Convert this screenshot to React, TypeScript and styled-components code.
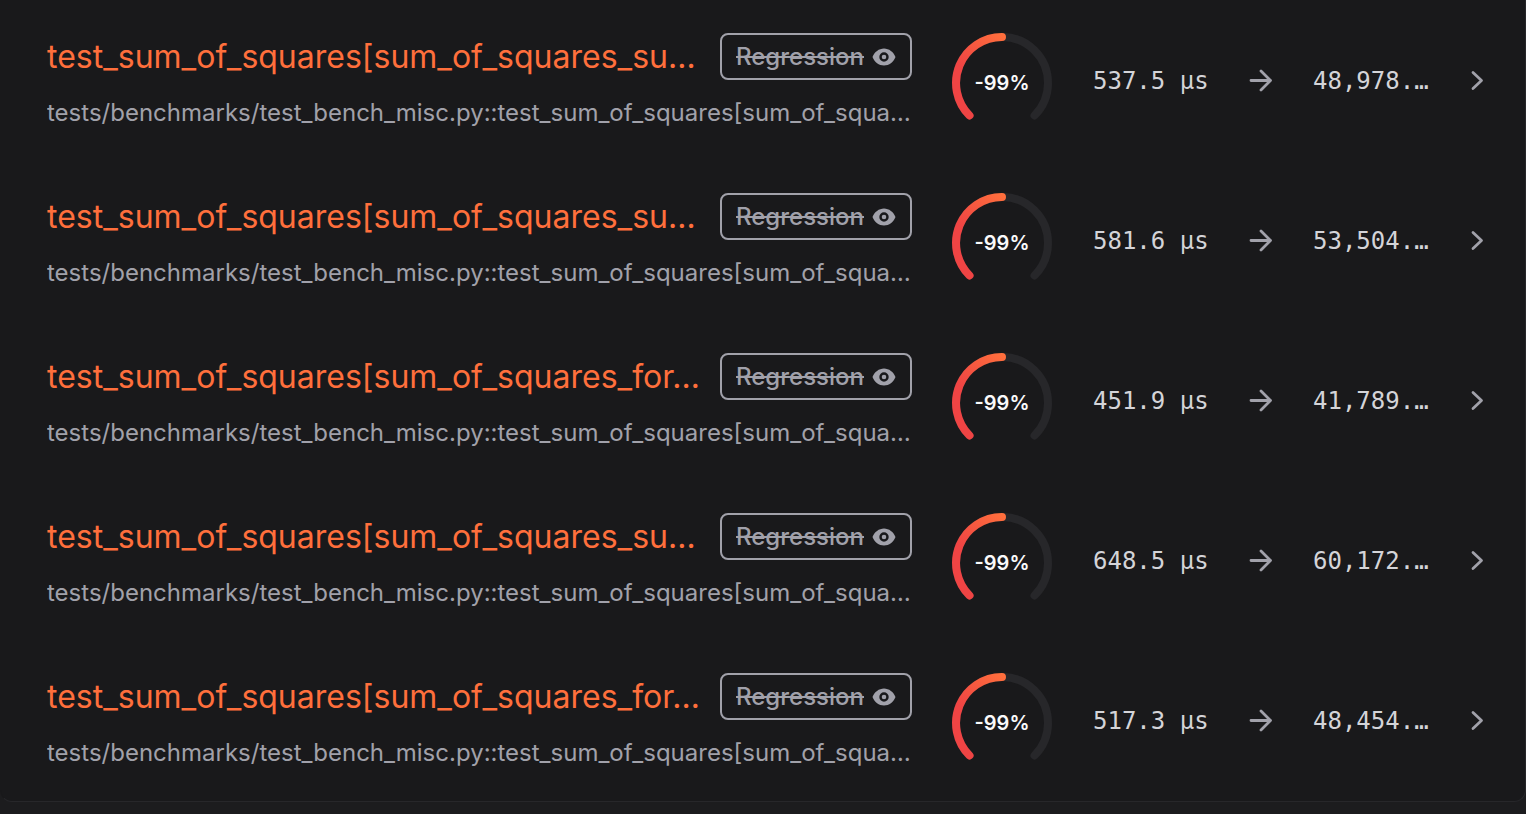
import React from "react";
import styled, { createGlobalStyle } from "styled-components";

const GlobalStyle = createGlobalStyle`
  * { box-sizing: border-box; }
  body {
    margin: 0;
    background: #1c1c1e;
    font-family: Inter, "Liberation Sans", sans-serif;
    -webkit-font-smoothing: antialiased;
  }
`;

const Page = styled.main`
  padding-bottom: 12px;
`;

const Card = styled.ul`
  margin: 0;
  padding: 1px 0 0;
  list-style: none;
  background: #19191b;
  border: 1px solid #27272a;
  border-top: 0;
  border-left-color: #19191b;
  border-radius: 0 0 12px 12px;
`;

const Row = styled.li`
  display: grid;
  grid-template-columns: minmax(0, 1fr) 100px 116px 24px 116px 24px;
  column-gap: 40px;
  align-items: center;
  height: 160px;
  padding: 0 33px 0 46px;
`;

const Summary = styled.div`
  display: flex;
  flex-direction: column;
  gap: 16px;
  min-width: 0;
`;

const TitleLine = styled.div`
  display: flex;
  align-items: flex-start;
  justify-content: space-between;
  gap: 16px;
`;

const Title = styled.a`
  min-width: 0;
  overflow: hidden;
  white-space: nowrap;
  color: #ff6f3c;
  font-size: 32px;
  line-height: 48px;
  text-decoration: none;
`;

const Badge = styled.button`
  display: flex;
  flex-shrink: 0;
  align-items: center;
  gap: 8px;
  height: 47px;
  padding: 0 14px;
  border: 2px solid #a1a1aa;
  border-radius: 8px;
  background: transparent;
  color: #a1a1aa;
  font-family: inherit;
  font-size: 24px;
  font-weight: 500;
  line-height: 32px;
  cursor: pointer;
`;

const Path = styled.div`
  overflow: hidden;
  white-space: nowrap;
  color: #a1a1aa;
  font-size: 24px;
  line-height: 32px;
`;

const GaugeBox = styled.div`
  display: grid;
  place-items: center;
  height: 104px;
  padding-top: 4px;
  > * { grid-area: 1 / 1; }
`;

const GaugeValue = styled.span`
  color: #fafafa;
  font-size: 20px;
  font-weight: 600;
  line-height: 24px;
`;

const Time = styled.span`
  padding-left: 1px;
  white-space: pre;
  color: #d4d4d8;
  font-family: "DejaVu Sans Mono", monospace;
  font-size: 24px;
  line-height: 32px;
`;

const Open = styled.button`
  display: flex;
  padding: 0;
  border: 0;
  background: transparent;
  color: #a1a1aa;
  cursor: pointer;
`;

const ArrowIcon = styled.svg`
  display: block;
  color: #a1a1aa;
`;

const PATH = "tests/benchmarks/test_bench_misc.py::test_sum_of_squares[sum_of_squa…";

const results = [
  { name: "test_sum_of_squares[sum_of_squares_su…", before: "537.5 µs", after: "48,978.…" },
  { name: "test_sum_of_squares[sum_of_squares_su…", before: "581.6 µs", after: "53,504.…" },
  { name: "test_sum_of_squares[sum_of_squares_for…", before: "451.9 µs", after: "41,789.…" },
  { name: "test_sum_of_squares[sum_of_squares_su…", before: "648.5 µs", after: "60,172.…" },
  { name: "test_sum_of_squares[sum_of_squares_for…", before: "517.3 µs", after: "48,454.…" },
];

function Gauge({ id }: { id: string }) {
  return (
    <GaugeBox>
      <svg width="100" height="100" viewBox="0 0 100 100" fill="none" strokeWidth="8" strokeLinecap="round" aria-hidden="true">
        <defs>
          <linearGradient id={id} x1="4" y1="60" x2="54" y2="4" gradientUnits="userSpaceOnUse">
            <stop offset="0.3" stopColor="#ef4444" />
            <stop offset="1" stopColor="#ff6f3c" />
          </linearGradient>
        </defs>
        <path d="M17.5 82.5A46 46 0 1 1 82.5 82.5" stroke="#27272a" />
        <path d="M17.5 82.5A46 46 0 0 1 50 4" stroke={`url(#${id})`} />
      </svg>
      <GaugeValue>-99%</GaugeValue>
    </GaugeBox>
  );
}

export default function App() {
  return (
    <>
      <GlobalStyle />
      <Page>
        <Card>
          {results.map((r, i) => (
            <Row key={i}>
              <Summary>
                <TitleLine>
                  <Title href="#">{r.name}</Title>
                  <Badge type="button">
                    <s>Regression</s>
                    <svg width="24" height="24" viewBox="0 0 24 24" fill="currentColor" aria-hidden="true">
                      <path fillRule="evenodd" d="M12 3.500C7 3.500 2.400 7 .5 12c1.900 5 6.500 8.500 11.500 8.500s9.600-3.500 11.500-8.500c-1.900-5-6.500-8.500-11.500-8.500zm0 13.200a4.700 4.700 0 1 1 0-9.400 4.700 4.700 0 0 1 0 9.400zm0-2.400a2.300 2.300 0 1 0 0-4.600 2.300 2.300 0 0 0 0 4.600z" />
                    </svg>
                  </Badge>
                </TitleLine>
                <Path>{PATH}</Path>
              </Summary>
              <Gauge id={`gauge-${i}`} />
              <Time>{r.before}</Time>
              <ArrowIcon width="24" height="24" viewBox="0 0 24 24" fill="none" stroke="currentColor" strokeWidth="2.800" strokeLinecap="round" strokeLinejoin="round" aria-hidden="true">
                <path d="M3 11.500h19.500M13 2l9.500 9.500L13 21" />
              </ArrowIcon>
              <Time>{r.after}</Time>
              <Open type="button" aria-label="Open benchmark">
                <svg width="24" height="24" viewBox="0 0 24 24" fill="none" stroke="currentColor" strokeWidth="2.800" strokeLinecap="round" strokeLinejoin="round" aria-hidden="true">
                  <path d="M5 3.500l8.500 8-8.500 8" />
                </svg>
              </Open>
            </Row>
          ))}
        </Card>
      </Page>
    </>
  );
}
